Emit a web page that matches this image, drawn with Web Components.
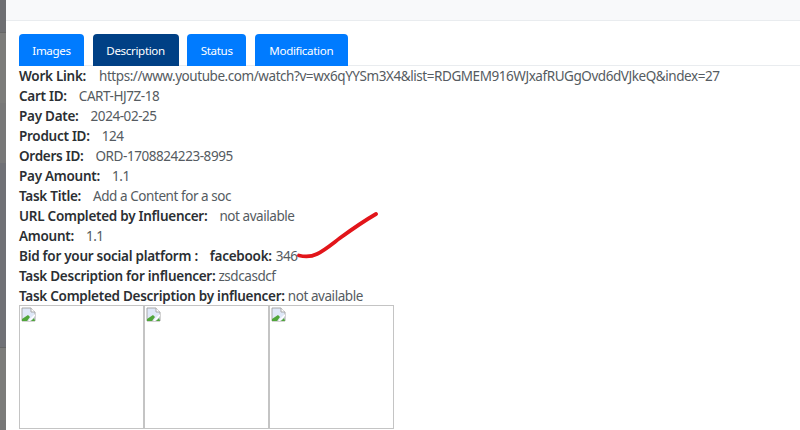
<!DOCTYPE html>
<html>
<head>
<meta charset="utf-8">
<style>
  html, body { margin: 0; height: 100%; overflow: hidden; background: #fff; }
  body { font-family: "Noto Sans", "Open Sans", sans-serif; }
</style>
</head>
<body>
<template id="row-tpl">
  <style>
    :host { display: block; height: 20px; line-height: 20px; font-size: 13.5px; color: #555b61; white-space: nowrap; letter-spacing: -0.44px; }
    ::slotted(b) { color: #2b2f33; font-weight: 600; letter-spacing: -0.27px; margin-right: var(--label-gap, 12px); }
  </style>
  <slot></slot>
</template>

<app-shell>
  <tab-bar>
    <tab-button style="width:65px">Images</tab-button>
    <tab-button style="width:86px" active>Description</tab-button>
    <tab-button style="width:59px">Status</tab-button>
    <tab-button style="width:93px">Modification</tab-button>
  </tab-bar>
  <info-row style="--label-gap:13px"><b>Work Link:</b>https://www.youtube.com/watch?v=wx6qYYSm3X4&amp;list=RDGMEM916WJxafRUGgOvd6dVJkeQ&amp;index=27</info-row>
  <info-row><b>Cart ID:</b>CART-HJ7Z-18</info-row>
  <info-row><b>Pay Date:</b>2024-02-25</info-row>
  <info-row><b>Product ID:</b>124</info-row>
  <info-row><b>Orders ID:</b>ORD-1708824223-8995</info-row>
  <info-row><b>Pay Amount:</b>1.1</info-row>
  <info-row><b>Task Title:</b>Add a Content for a soc</info-row>
  <info-row><b>URL Completed by Influencer:</b>not available</info-row>
  <info-row><b>Amount:</b>1.1</info-row>
  <info-row><b>Bid for your social platform :</b><b style="--label-gap:4px">facebook:</b>346</info-row>
  <info-row style="--label-gap:3px"><b>Task Description for influencer:</b>zsdcasdcf</info-row>
  <info-row style="--label-gap:3px"><b>Task Completed Description by influencer:</b>not available</info-row>
  <image-strip>
    <broken-image></broken-image>
    <broken-image></broken-image>
    <broken-image></broken-image>
  </image-strip>
</app-shell>

<script>
class AppShell extends HTMLElement {
  connectedCallback() {
    this.attachShadow({ mode: 'open' });
    this.shadowRoot.innerHTML = `
      <style>
        :host { display: flex; width: 800px; height: 430px; overflow: hidden; position: relative; }
        .rail { width: 6px; flex: none; background: linear-gradient(#6e6f72 0 32px, #666 32px 33px, #7c7c7a 33px 103px, #787878 103px 163px, #707176 163px 347px, #666 347px 348px, #7c7c7a 348px 420px, #777 420px); }
        .main { flex: 1; min-width: 0; }
        .top { height: 20px; background: #f8f9fa; border-bottom: 1px solid #e9ecef; }
        .body { padding: 13px 0 0 13px; }
        .mark { position: absolute; left: 297px; top: 210px; pointer-events: none; }
      </style>
      <div class="rail"></div>
      <div class="main">
        <div class="top"></div>
        <div class="body"><slot></slot></div>
      </div>
      <svg class="mark" width="84" height="50" viewBox="0 0 84 50">
        <path d="M2 45.5 C8 47 14 47 20 44 C28 40 35 34 43 28 C54 20 67 11 79 4" fill="none" stroke="#e2151a" stroke-width="3.8" stroke-linecap="round"/>
      </svg>`;
  }
}
class TabBar extends HTMLElement {
  connectedCallback() {
    this.attachShadow({ mode: 'open' });
    this.shadowRoot.innerHTML = `
      <style>
        :host { display: flex; gap: 8.6px; height: 31px; border-bottom: 1px solid #e9ecef; }
      </style>
      <slot></slot>`;
  }
}
class TabButton extends HTMLElement {
  connectedCallback() {
    this.attachShadow({ mode: 'open' });
    this.shadowRoot.innerHTML = `
      <style>
        :host { display: block; height: 32px; line-height: 33px; text-align: center; font-size: 11.6px; color: #fff; background: #007bff; border-radius: 4px 4px 0 0; letter-spacing: -0.35px; }
        :host([active]) { background: #004085; }
      </style>
      <slot></slot>`;
  }
}
class InfoRow extends HTMLElement {
  connectedCallback() {
    this.attachShadow({ mode: 'open' });
    this.shadowRoot.appendChild(document.getElementById('row-tpl').content.cloneNode(true));
  }
}
class ImageStrip extends HTMLElement {
  connectedCallback() {
    this.attachShadow({ mode: 'open' });
    this.shadowRoot.innerHTML = `
      <style>:host { display: flex; margin-top: -1px; }</style>
      <slot></slot>`;
  }
}
class BrokenImage extends HTMLElement {
  connectedCallback() {
    this.attachShadow({ mode: 'open' });
    this.shadowRoot.innerHTML = `
      <style>
        :host { display: block; width: 125px; height: 124px; box-sizing: border-box; border: 1px solid #c4c4c4; flex: none; }
        svg { display: block; margin: 1px 0 0 1px; }
      </style>
      <svg width="15" height="15" viewBox="0 0 15 15">
        <path d="M1 1 H10 L14 5 V14 H1 Z" fill="#dfe8f8" stroke="#a8a8a8" stroke-width="1"/>
        <path d="M10 1 V5 H14" fill="#fff" stroke="#a8a8a8" stroke-width="1"/>
        <path d="M1 14 L1 12 L7 8 L9 10 L6 14 Z" fill="#4fa63a"/>
        <path d="M10 14 L13 11 L14 14 Z" fill="#4fa63a"/>
        <path d="M14 7 L7 14 H9 L14 9 Z" fill="#fff"/>
      </svg>`;
  }
}
customElements.define('app-shell', AppShell);
customElements.define('tab-bar', TabBar);
customElements.define('tab-button', TabButton);
customElements.define('info-row', InfoRow);
customElements.define('image-strip', ImageStrip);
customElements.define('broken-image', BrokenImage);
</script>
</body>
</html>
